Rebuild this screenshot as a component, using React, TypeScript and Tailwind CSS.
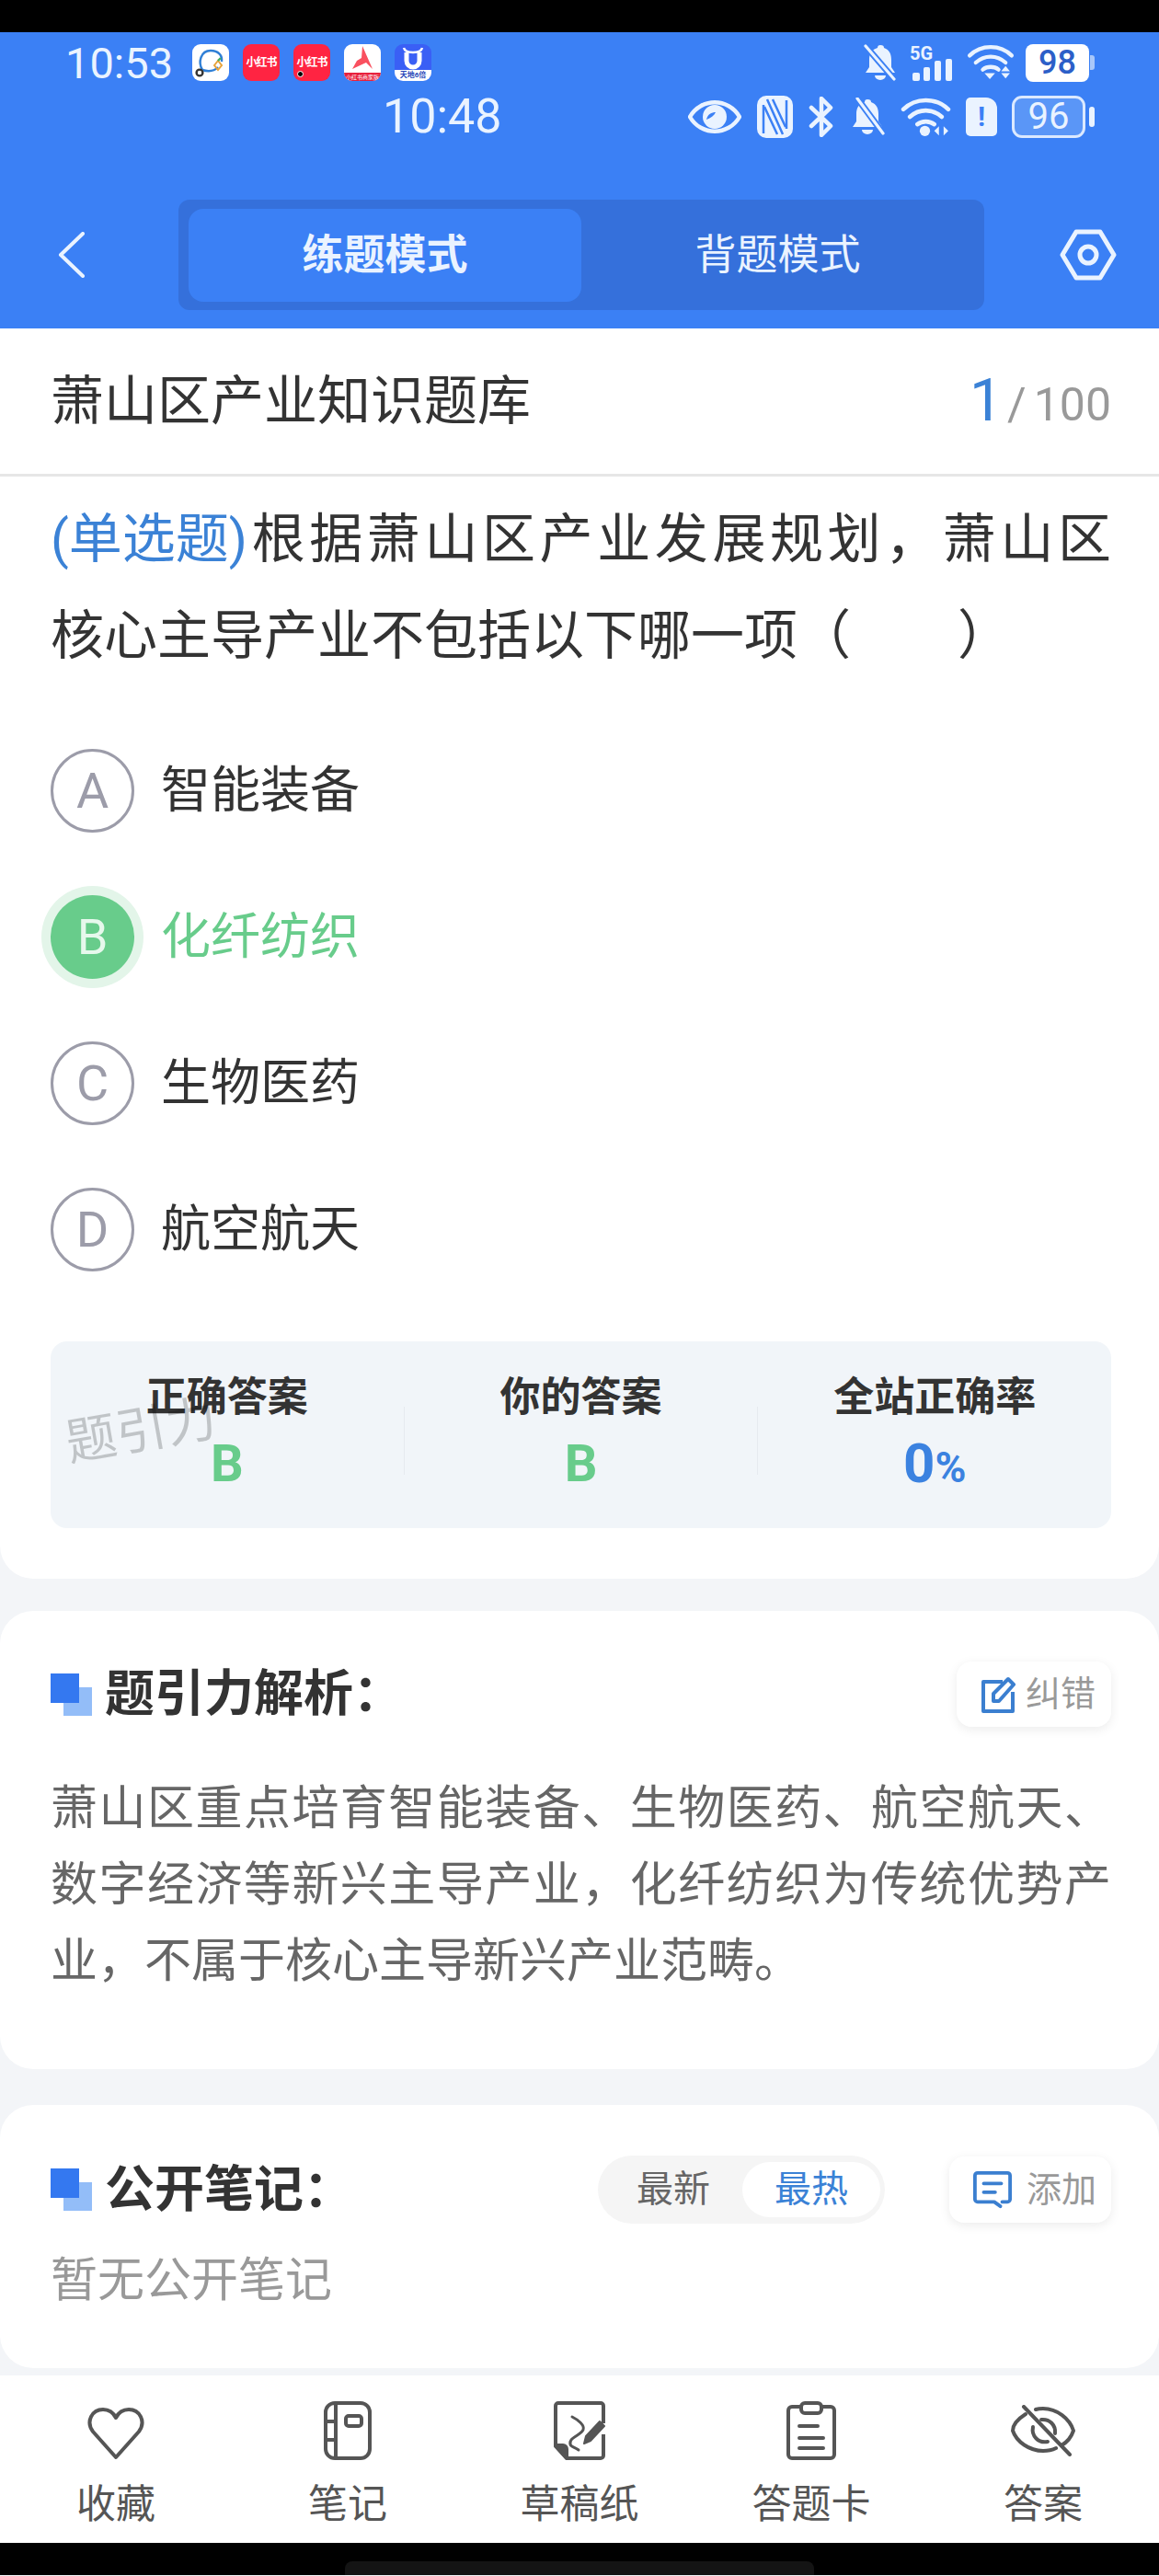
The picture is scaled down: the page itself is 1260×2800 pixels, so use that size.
const ink = '#eaf3ff';

function AppIcon({ label, dark, dot }: { label: string; dark?: boolean; dot?: boolean }) {
  return (
    <div className={`relative w-[40px] h-[40px] rounded-[9px] flex items-center justify-center bg-[#ff2442] text-white text-[12px] font-bold tracking-[-1px] ${dark ? 'bg-[#e8203c]' : ''}`}>
      {label}
      {dot && <span className="absolute left-[4px] bottom-[4px] w-[7px] h-[7px] rounded-full bg-black border border-white" />}
    </div>
  );
}

function ChatApp() {
  return (
    <div className="w-[40px] h-[40px] rounded-[9px] bg-white">
      <svg viewBox="0 0 40 40" className="w-full h-full" fill="none">
        <path d="M11 28C6 20 9 7 20 7c8 0 13 5 12 12" stroke="#2f7fd6" strokeWidth="2.4" />
        <path d="M11 28c6 2 12 2 17-3" stroke="#2f7fd6" strokeWidth="2.4" />
        <path d="M24 23l4-5 4 5-4 5z" stroke="#e8a33a" strokeWidth="2" />
        <path d="M28 18l3-3" stroke="#3fae5f" strokeWidth="2.4" />
        <circle cx="8" cy="31" r="3.4" fill="#fff" stroke="#333" strokeWidth="2.4" />
      </svg>
    </div>
  );
}

function RedA() {
  return (
    <div className="w-[40px] h-[40px] rounded-[9px] bg-white overflow-hidden flex flex-col">
      <svg viewBox="0 0 40 31" className="w-[40px] h-[31px]">
        <path d="M20 2L31 27 24 20 9 27 14 18 19 15z" fill="#f9505f" />
      </svg>
      <div className="flex-1 bg-[#e8203c] text-white text-[6px] leading-[9px] text-center whitespace-nowrap">小红书商家版</div>
    </div>
  );
}

function BullApp() {
  return (
    <div className="w-[40px] h-[40px] rounded-[9px] bg-[#3a5ff5] overflow-hidden flex flex-col">
      <svg viewBox="0 0 40 28" className="w-[40px] h-[28px]" fill="none">
        <path d="M10 4c1 4 4 5 10 5s9-1 10-5" stroke="#fff" strokeWidth="2.5" />
        <path d="M13 9v9a7 7 0 0 0 14 0V9" stroke="#fff" strokeWidth="5" />
      </svg>
      <div className="flex-1 bg-white text-[#2946b8] text-[8px] leading-[12px] text-center font-bold whitespace-nowrap">天地6倍</div>
    </div>
  );
}

function BellOff({ className, flip }: { className: string; flip?: boolean }) {
  return (
    <svg viewBox="0 0 38 40" className={className}>
      <path d="M19 1c-2 0-3 1-3 3C9 6 7 11 7 17v8l-4 6h32l-4-6v-8c0-6-2-11-8-13 0-2-1-3-4-3z" fill={ink} />
      <path d="M13 34a6 5 0 0 0 12 0z" fill={ink} />
      <path d={flip ? 'M8 0l28 38' : 'M3 2l31 36'} stroke="#3b80f5" strokeWidth="7" />
      <path d={flip ? 'M8 0l28 38' : 'M3 2l31 36'} stroke={ink} strokeWidth="3.2" strokeLinecap="round" />
    </svg>
  );
}

function Wifi({ className, bottom }: { className: string; bottom: 'updown' | 'sides' }) {
  return (
    <svg viewBox="0 0 54 42" className={className} fill="none" stroke={ink} strokeLinecap="round">
      <path d="M3 13C16 0 38 0 51 13" strokeWidth="4.5" />
      <path d="M10 21c10-9 24-9 34 0" strokeWidth="4.5" />
      <path d="M18 29c5-4 13-4 18 0" strokeWidth="4.5" />
      {bottom === 'updown' ? (
        <>
          <path d="M20 33h12l-6 7z" fill={ink} stroke="none" />
          <path d="M44 25l5 6H39zM39 33h10l-5 6z" fill={ink} stroke="none" />
        </>
      ) : (
        <>
          <circle cx="26" cy="36" r="5.5" fill={ink} stroke="none" />
          <path d="M41 31v10l-5-5zM46 31v10l5-5z" fill={ink} stroke="none" />
        </>
      )}
    </svg>
  );
}

function Signal() {
  return (
    <div className="w-[49px] h-[40px] relative">
      <span className="absolute left-0 top-[-2px] text-[20px] leading-[24px] font-bold text-[#eaf3ff]">5G</span>
      <svg viewBox="0 0 49 40" className="w-[49px] h-[40px]" fill={ink}>
        <rect x="3" y="31" width="8" height="9" rx="2" />
        <rect x="15" y="25" width="7" height="15" rx="2" />
        <rect x="27" y="18" width="7" height="22" rx="2" />
        <rect x="39" y="16" width="7" height="24" rx="2" />
      </svg>
    </div>
  );
}

function Nfc() {
  return (
    <svg viewBox="0 0 39 46" className="w-[39px] h-[46px]" fill="none">
      <rect x="0" y="0" width="39" height="46" rx="10" fill={ink} />
      <path d="M7 41V10M32 5v31" stroke="#3b80f5" strokeWidth="2.5" />
      <path d="M11 4l17 38M17 4l14 30M8 12l14 30" stroke="#3b80f5" strokeWidth="2.5" />
    </svg>
  );
}

function Bluetooth() {
  return (
    <svg viewBox="0 0 28 44" className="w-[28px] h-[44px]" fill="none" stroke={ink} strokeWidth="4.5" strokeLinecap="round" strokeLinejoin="round">
      <path d="M3 12l21 20-10 10V2l10 10L3 32" />
    </svg>
  );
}

function Eye() {
  return (
    <svg viewBox="0 0 58 46" className="w-[58px] h-[46px]" fill="none">
      <path d="M2 23C14 2 44 2 56 23 44 44 14 44 2 23z" stroke={ink} strokeWidth="4.5" />
      <circle cx="29" cy="23" r="13" fill={ink} />
      <path d="M20 26c1-6 6-8 10-8-2 4-5 6-10 8z" fill="#3b80f5" />
    </svg>
  );
}

function Sim() {
  return (
    <div className="w-[34px] h-[42px] bg-[#eaf3ff] rounded-[5px] rounded-tr-[12px] flex items-center justify-center text-[#3b80f5] text-[30px] leading-none font-bold">!</div>
  );
}

function TitleMark() {
  return (
    <svg viewBox="0 0 45 46" className="w-[45px] h-[46px]">
      <rect x="14" y="15" width="31" height="31" fill="#93bdf8" />
      <rect x="0" y="0" width="31" height="32" fill="#3478f0" />
    </svg>
  );
}

function Option({ letter, text, active }: { letter: string; text: string; active?: boolean }) {
  return (
    <div className="h-[159px] flex items-center">
      <div className={`w-[91px] h-[91px] rounded-full flex items-center justify-center text-[54px] ${active ? 'bg-[#68cc8b] text-[#e6f8ec] shadow-[0_0_0_10px_#e3f5e9]' : 'border-[3px] border-[#9c9ca9] text-[#9c9ca9]'}`}>
        {letter}
      </div>
      <div className={`ml-[29px] text-[54px] ${active ? 'text-[#68cc8b]' : 'text-[#333333]'}`}>{text}</div>
    </div>
  );
}

function Stat({ label, children }: { label: string; children: React.ReactNode }) {
  return (
    <div className="flex-1 flex flex-col items-center pt-[31px]">
      <div className="text-[44px] leading-[60px] font-bold text-[#333333]">{label}</div>
      <div className="mt-[12px] h-[60px] flex items-center font-bold">{children}</div>
    </div>
  );
}

const navStroke = '#555555';

function NavItem({ label, children }: { label: string; children: React.ReactNode }) {
  return (
    <div className="flex flex-col items-center">
      <div className="h-[66px] flex items-center justify-center">{children}</div>
      <div className="mt-[17px] text-[43px] leading-[60px] text-[#555555]">{label}</div>
    </div>
  );
}

export default function App() {
  return (
    <div className="w-[1260px] h-[2800px] flex flex-col bg-[#f3f5f8] overflow-hidden font-['Roboto','Noto_Sans_CJK_SC',sans-serif]">
      <div className="h-[35px] bg-black" />

      {/* blue header with the two stacked status bars */}
      <div className="h-[322px] bg-[#3b80f5] text-[#eaf3ff]">
        <div className="h-[40px] mt-[13px] pl-[71px] pr-[70px] flex items-center">
          <div className="w-[138px] text-[47px] leading-none">10:53</div>
          <div className="flex gap-[15px]">
            <ChatApp />
            <AppIcon label="小红书" />
            <AppIcon label="小红书" dark dot />
            <RedA />
            <BullApp />
          </div>
          <div className="ml-auto flex items-center">
            <BellOff className="w-[38px] h-[40px]" />
            <div className="ml-[13px]"><Signal /></div>
            <div className="ml-[13px]"><Wifi className="w-[52px] h-[40px]" bottom="updown" /></div>
            <div className="ml-[12px] w-[69px] h-[41px] rounded-[8px] bg-white flex items-center justify-center text-[36px] font-medium text-[#2c5fc8]">98</div>
            <div className="ml-px w-[5px] h-[16px] rounded-r-[3px] bg-[#a9c8fa]" />
          </div>
        </div>

        <div className="mt-[16px] h-[46px] pl-[416px] pr-[70px] flex items-center">
          <div className="text-[52px] leading-none">10:48</div>
          <div className="ml-auto flex items-center">
            <Eye />
            <div className="ml-[17px]"><Nfc /></div>
            <div className="ml-[17px]"><Bluetooth /></div>
            <div className="ml-[17px]"><BellOff className="w-[38px] h-[42px]" flip /></div>
            <div className="ml-[17px]"><Wifi className="w-[55px] h-[44px]" bottom="sides" /></div>
            <div className="ml-[16px]"><Sim /></div>
            <div className="ml-[16px] w-[80px] h-[46px] rounded-[11px] border-[3px] border-[#dbe9ff] bg-[#5a96f7] flex items-center justify-center text-[40px] text-[#eaf3ff]">96</div>
            <div className="ml-[4px] w-[6px] h-[22px] rounded-[3px] bg-[#eaf3ff]" />
          </div>
        </div>

        <div className="mt-[67px] h-[120px] pl-[63px] pr-[46px] flex items-center">
          <svg viewBox="0 0 30 50" className="w-[30px] h-[50px]" fill="none" stroke={ink} strokeWidth="4" strokeLinecap="round" strokeLinejoin="round">
            <path d="M27 2L3 25l24 23" />
          </svg>
          <div className="ml-[101px] w-[876px] h-[120px] rounded-[12px] bg-[#3570db] pl-[11px] pt-[10px] flex">
            <div className="w-[427px] h-[101px] rounded-[16px] bg-[#3b80f5] flex items-center justify-center text-[45px] font-bold">练题模式</div>
            <div className="w-[427px] h-[101px] flex items-center justify-center text-[45px]">背题模式</div>
          </div>
          <svg viewBox="0 0 62 56" className="ml-auto w-[62px] h-[56px]" fill="none" stroke={ink} strokeWidth="5" strokeLinejoin="round">
            <path d="M18 3h26l15 25-15 25H18L3 28z" />
            <circle cx="31" cy="28" r="9" />
          </svg>
        </div>
      </div>

      {/* question card */}
      <div className="bg-white rounded-b-[36px]">
        <div className="h-[161px] pl-[52px] pr-[52px] border-b-[3px] border-[#e6e6e6] flex items-center justify-between">
          <div className="ml-[3px] text-[58px] text-[#333333]">萧山区产业知识题库</div>
          <div className="flex items-baseline text-[#999999] text-[50px]">
            <span className="text-[64px] text-[#3b82d6] mr-[5px]">1</span>
            <span className="mr-[8px]">/</span>
            <span>100</span>
          </div>
        </div>

        <div className="pl-[55px] pr-[52px]">
          <div className="mt-[16px] text-[58px] leading-[105px] text-[#333333]">
            <div className="[text-align-last:justify]">
              <span className="inline-block text-[#3b82d6]">(单选题)</span>根据萧山区产业发展规划，萧山区
            </div>
            <div>核心主导产业不包括以下哪一项（　　）</div>
          </div>
          <div className="mt-[36px]">
            <Option letter="A" text="智能装备" />
            <Option letter="B" text="化纤纺织" active />
            <Option letter="C" text="生物医药" />
            <Option letter="D" text="航空航天" />
          </div>

          <div className="relative mt-[42px] h-[203px] rounded-[18px] bg-[#f1f5f9] flex">
            <Stat label="正确答案"><span className="text-[56px] text-[#68cc8b]">B</span></Stat>
            <div className="mt-[71px] w-px h-[74px] bg-[#e6eaef]" />
            <Stat label="你的答案"><span className="text-[56px] text-[#68cc8b]">B</span></Stat>
            <div className="mt-[71px] w-px h-[74px] bg-[#e6eaef]" />
            <Stat label="全站正确率">
              <span className="text-[60px] text-[#3b82e0]">0</span>
              <span className="text-[46px] mt-[8px] text-[#3b82e0]">%</span>
            </Stat>
            <div className="absolute left-[16px] top-[62px] -rotate-[10deg] text-[55px] leading-[70px] text-[#000000]/20">题引力</div>
          </div>
        </div>
        <div className="h-[55px]" />
      </div>

      {/* analysis card */}
      <div className="mt-[35px] bg-white rounded-[36px] pl-[55px] pr-[52px] pt-[55px] pb-[76px]">
        <div className="h-[71px] flex items-center">
          <TitleMark />
          <div className="ml-[14px] text-[54px] font-bold text-[#333333]">题引力解析：</div>
          <div className="ml-auto w-[168px] h-[71px] rounded-[16px] bg-white shadow-[0_3px_12px_rgba(0,0,0,0.08)] flex items-center pl-[26px]">
            <svg viewBox="0 0 38 40" className="w-[38px] h-[40px]" fill="none" stroke="#3b7fd0" strokeWidth="4" strokeLinejoin="round">
              <path d="M24 6H3v32h32V17" />
              <path d="M14 27V19L30 3l6 6-16 18z" />
            </svg>
            <span className="ml-[11px] text-[38px] text-[#999999]">纠错</span>
          </div>
        </div>
        <div className="mt-[47px] text-[51px] leading-[83px] text-[#666666] text-justify">
          萧山区重点培育智能装备、生物医药、航空航天、数字经济等新兴主导产业，化纤纺织为传统优势产业，不属于核心主导新兴产业范畴。
        </div>
      </div>

      {/* public notes card */}
      <div className="mt-[39px] bg-white rounded-[36px] pl-[55px] pr-[52px] pt-[56px] pb-[60px]">
        <div className="h-[72px] flex items-center">
          <TitleMark />
          <div className="ml-[14px] text-[54px] font-bold text-[#333333]">公开笔记：</div>
          <div className="ml-auto w-[312px] h-[74px] rounded-full bg-[#f5f5f5] flex items-center pl-[7px]">
            <div className="w-[150px] text-center text-[40px] text-[#666666]">最新</div>
            <div className="w-[150px] h-[60px] rounded-full bg-white flex items-center justify-center text-[40px] text-[#3b82d6]">最热</div>
          </div>
          <div className="ml-[70px] w-[176px] h-[72px] rounded-[16px] bg-white shadow-[0_3px_12px_rgba(0,0,0,0.08)] flex items-center pl-[26px]">
            <svg viewBox="0 0 44 44" className="w-[42px] h-[42px]" fill="none" stroke="#3b7fd0" strokeWidth="4" strokeLinecap="round" strokeLinejoin="round">
              <path d="M33 36h6a3 3 0 0 0 3-3V6a3 3 0 0 0-3-3H5a3 3 0 0 0-3 3v27a3 3 0 0 0 3 3h19l7 5" />
              <path d="M12 15h20M12 25h13" />
            </svg>
            <span className="ml-[16px] text-[38px] text-[#999999]">添加</span>
          </div>
        </div>
        <div className="mt-[28px] text-[51px] leading-[70px] text-[#999999]">暂无公开笔记</div>
      </div>

      {/* bottom toolbar */}
      <div className="mt-[8px] h-[182px] bg-white pt-[27px] grid grid-cols-5">
        <NavItem label="收藏">
          <svg viewBox="0 0 64 58" className="mt-[6px] w-[64px] h-[58px]" fill="none" stroke={navStroke} strokeWidth="4" strokeLinejoin="round">
            <path d="M32 55L7 27C-1 16 6 3 18 3c6 0 11 3 14 9 3-6 8-9 14-9 12 0 19 13 11 24z" />
          </svg>
        </NavItem>
        <NavItem label="笔记">
          <svg viewBox="0 0 52 64" className="w-[52px] h-[64px]" fill="none" stroke={navStroke} strokeWidth="4">
            <rect x="2" y="2" width="48" height="60" rx="10" />
            <path d="M13 2v60M2 22h11M2 42h11" />
            <rect x="24" y="16" width="17" height="11" rx="3" />
          </svg>
        </NavItem>
        <NavItem label="草稿纸">
          <svg viewBox="0 0 56 64" className="w-[56px] h-[64px]" fill="none" stroke={navStroke} strokeWidth="4" strokeLinejoin="round">
            <path d="M54 24V5a3 3 0 0 0-3-3H5a3 3 0 0 0-3 3v44l12 13h37a3 3 0 0 0 3-3V36" />
            <path d="M2 48h8a4 4 0 0 1 4 4v10z" fill={navStroke} />
            <path d="M20 17c6 3 14 9 12 14-2 6-16 8-14 16 1 3 5 3 9 6" strokeWidth="3" strokeLinecap="round" />
            <path d="M33 46l2-8 15-16 5 5-15 16z" fill={navStroke} strokeWidth="2" />
          </svg>
        </NavItem>
        <NavItem label="答题卡">
          <svg viewBox="0 0 54 64" className="w-[54px] h-[64px]" fill="none" stroke={navStroke} strokeWidth="4" strokeLinecap="round">
            <path d="M15 6H6a4 4 0 0 0-4 4v48a4 4 0 0 0 4 4h42a4 4 0 0 0 4-4V10a4 4 0 0 0-4-4h-9" />
            <rect x="16" y="2" width="22" height="11" rx="4" />
            <path d="M14 27h20M14 40h26M14 51h26" />
          </svg>
        </NavItem>
        <NavItem label="答案">
          <svg viewBox="0 0 70 56" className="w-[70px] h-[56px]" fill="none" stroke={navStroke} strokeWidth="4" strokeLinecap="round">
            <path d="M16 10C5 17 2 24 2 28c4 12 18 22 33 22 6 0 10-1 14-3M27 5c3-1 6-1 8-1 15 0 29 11 33 24-2 6-6 12-13 16" />
            <path d="M24 24c-2 10 6 18 16 16M33 16c9-1 16 6 15 15" />
            <path d="M14 2l50 52" />
          </svg>
        </NavItem>
      </div>

      <div className="h-[35px] bg-black flex justify-center pt-[20px]">
        <div className="w-[510px] h-[15px] rounded-t-[8px] bg-[#141414]" />
      </div>
    </div>
  );
}
